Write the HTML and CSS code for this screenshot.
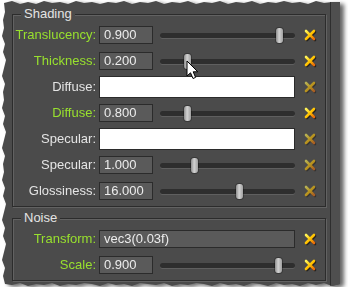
FILE: index.html
```html
<!DOCTYPE html>
<html>
    <head>
        <title>material properties</title>
        <link rel="stylesheet" href="styles.css">
    </head>
    <body>
        <div class='frame'>
        <div class='paper'>
            <div class='content'>
                <div class='group'>
                    <span class='legend'>Shading</span>
                    <div class='row'>
                        <span class='lbl on'>Translucency:</span>
                        <span class='num'>0.900</span>
                        <span class='slider'><i class='thumb' style='left:116px'></i></span>
                        <svg class='x' viewBox='0 0 12 12'><use href='#cross'/></svg>
                    </div>
                    <div class='row'>
                        <span class='lbl on'>Thickness:</span>
                        <span class='num'>0.200</span>
                        <span class='slider'><i class='thumb' style='left:24px'></i></span>
                        <svg class='x' viewBox='0 0 12 12'><use href='#cross'/></svg>
                    </div>
                    <div class='row'>
                        <span class='lbl'>Diffuse:</span>
                        <span class='colour'></span>
                        <svg class='x dim' viewBox='0 0 12 12'><use href='#cross'/></svg>
                    </div>
                    <div class='row'>
                        <span class='lbl on'>Diffuse:</span>
                        <span class='num'>0.800</span>
                        <span class='slider'><i class='thumb' style='left:24px'></i></span>
                        <svg class='x' viewBox='0 0 12 12'><use href='#cross'/></svg>
                    </div>
                    <div class='row'>
                        <span class='lbl'>Specular:</span>
                        <span class='colour'></span>
                        <svg class='x dim' viewBox='0 0 12 12'><use href='#cross'/></svg>
                    </div>
                    <div class='row'>
                        <span class='lbl'>Specular:</span>
                        <span class='num'>1.000</span>
                        <span class='slider'><i class='thumb' style='left:31px'></i></span>
                        <svg class='x dim' viewBox='0 0 12 12'><use href='#cross'/></svg>
                    </div>
                    <div class='row'>
                        <span class='lbl'>Glossiness:</span>
                        <span class='num'>16.000</span>
                        <span class='slider'><i class='thumb' style='left:76px'></i></span>
                        <svg class='x dim' viewBox='0 0 12 12'><use href='#cross'/></svg>
                    </div>
                </div>
                <div class='group'>
                    <span class='legend'>Noise</span>
                    <div class='row'>
                        <span class='lbl on'>Transform:</span>
                        <span class='num wide'>vec3(0.03f)</span>
                        <svg class='x' viewBox='0 0 12 12'><use href='#cross'/></svg>
                    </div>
                    <div class='row'>
                        <span class='lbl on'>Scale:</span>
                        <span class='num'>0.900</span>
                        <span class='slider'><i class='thumb' style='left:115px'></i></span>
                        <svg class='x' viewBox='0 0 12 12'><use href='#cross'/></svg>
                    </div>
                </div>
            </div>
            <div class='scroll'></div>
            <svg class='cursor' width='14' height='21' viewBox='0 0 14 21'>
                <path d='M1 1 L1 16 L4.5 12.8 L7 18.5 L9.6 17.4 L7.2 11.8 L11.8 11.8 Z' fill='#fff' stroke='#000' stroke-width='1' stroke-linejoin='round'/>
            </svg>
        </div>
        </div>
        <svg width='0' height='0' class='defs'>
            <defs>
                <linearGradient id='gold' x1='0' y1='0' x2='1' y2='1'>
                    <stop offset='0' stop-color='#fff45a'/>
                    <stop offset='0.5' stop-color='#ffc400'/>
                    <stop offset='1' stop-color='#e8690a'/>
                </linearGradient>
                <g id='cross'>
                    <path d='M2 2 L10 10 M10 2 L2 10' stroke='url(#gold)' stroke-width='2.6' stroke-linecap='round'/>
                </g>
            </defs>
        </svg>
    </body>
</html>
```

FILE: styles.css
```css
body {
    margin:0;
    background:#fff;
    font:13px/16px 'Liberation Sans', Arial, sans-serif;
    color:#e4e4e4;
}
.frame {
    width:340px;
    filter:drop-shadow(4px 2px 2px rgba(0,0,0,0.6));
}
.paper {
    position:relative;
    display:flex;
    width:340px;
    height:287px;
    background:#4b4b4b;
    clip-path:polygon(4px 3px, 12px 1px, 20px 4px, 28px 2px, 36px 4px, 44px 1px, 52px 3px, 60px 2px, 68px 4px, 76px 1px, 84px 3px, 92px 2px, 100px 4px, 108px 2px, 116px 3px, 124px 1px, 132px 4px, 140px 2px, 148px 3px, 156px 1px, 164px 4px, 172px 2px, 180px 3px, 188px 1px, 196px 4px, 204px 2px, 212px 3px, 220px 1px, 228px 4px, 236px 2px, 244px 3px, 252px 1px, 260px 4px, 268px 2px, 276px 3px, 284px 1px, 292px 3px, 300px 2px, 308px 4px, 316px 1px, 324px 3px, 332px 2px, 340px 2px,
        340px 284px, 332px 286px, 324px 283px, 316px 285px, 308px 283px, 300px 286px, 292px 284px, 284px 285px, 276px 283px, 268px 286px, 260px 284px, 252px 283px, 244px 286px, 236px 284px, 228px 285px, 220px 283px, 212px 286px, 204px 284px, 196px 283px, 188px 285px, 180px 284px, 172px 286px, 164px 283px, 156px 285px, 148px 284px, 140px 283px, 132px 286px, 124px 284px, 116px 285px, 108px 283px, 100px 286px, 92px 284px, 84px 283px, 76px 285px, 68px 284px, 60px 286px, 52px 283px, 44px 285px, 36px 284px, 28px 286px, 20px 283px, 12px 285px, 5px 284px,
        3px 276px, 5px 268px, 2px 260px, 4px 252px, 6px 244px, 3px 236px, 5px 228px, 2px 220px, 4px 212px, 6px 204px, 3px 196px, 5px 188px, 2px 180px, 4px 172px, 3px 164px, 5px 156px, 2px 148px, 4px 140px, 6px 132px, 3px 124px, 5px 116px, 2px 108px, 4px 100px, 3px 92px, 5px 84px, 2px 76px, 4px 68px, 6px 60px, 3px 52px, 5px 44px, 2px 36px, 4px 28px, 3px 20px, 5px 12px);
}
.content {
    width:314px;
    padding:14px 4px 0 12px;
}
.scroll {
    flex:1;
    border-left:1px solid #2e2e2e;
    background:#4f4f4f;
}
.group {
    position:relative;
    padding:7px 0 2px;
    margin-bottom:11px;
    border:1px solid #2c2c2c;
    box-shadow:1px 1px 0 #626262, inset 1px 1px 0 #626262;
}
.legend {
    position:absolute;
    top:-9px;
    left:8px;
    padding:0 3px;
    background:#4b4b4b;
}
.row {
    display:flex;
    align-items:center;
    height:26px;
}
.lbl {
    width:83px;
    margin-right:3px;
    text-align:right;
    white-space:nowrap;
}
.lbl.on {
    color:#98e02e;
}
.num {
    box-sizing:border-box;
    width:54px;
    height:18px;
    padding:0 4px;
    line-height:16px;
    background:#5a5a5a;
    border:1px solid #2b2b2b;
    color:#ececec;
}
.num.wide {
    width:196px;
}
.colour {
    box-sizing:border-box;
    width:196px;
    height:22px;
    background:#fff;
    border:1px solid #2b2b2b;
}
.slider {
    position:relative;
    width:135px;
    height:5px;
    margin-left:7px;
    background:#2e2e2e;
    border-radius:3px;
    box-shadow:0 1px 0 #5f5f5f;
}
.thumb {
    position:absolute;
    top:-5px;
    width:7px;
    height:15px;
    border-radius:3px;
    background:linear-gradient(to right, #8e8e8e, #d2d2d2 45%, #a0a0a0);
    box-shadow:0 0 0 1px rgba(0,0,0,0.25);
}
.x {
    width:12px;
    height:12px;
    margin-left:9px;
    filter:drop-shadow(1px 1px 0 rgba(0,0,0,0.55));
}
.x.dim {
    opacity:0.6;
}
.cursor {
    position:absolute;
    left:186px;
    top:60px;
}
.defs {
    position:absolute;
}
```
